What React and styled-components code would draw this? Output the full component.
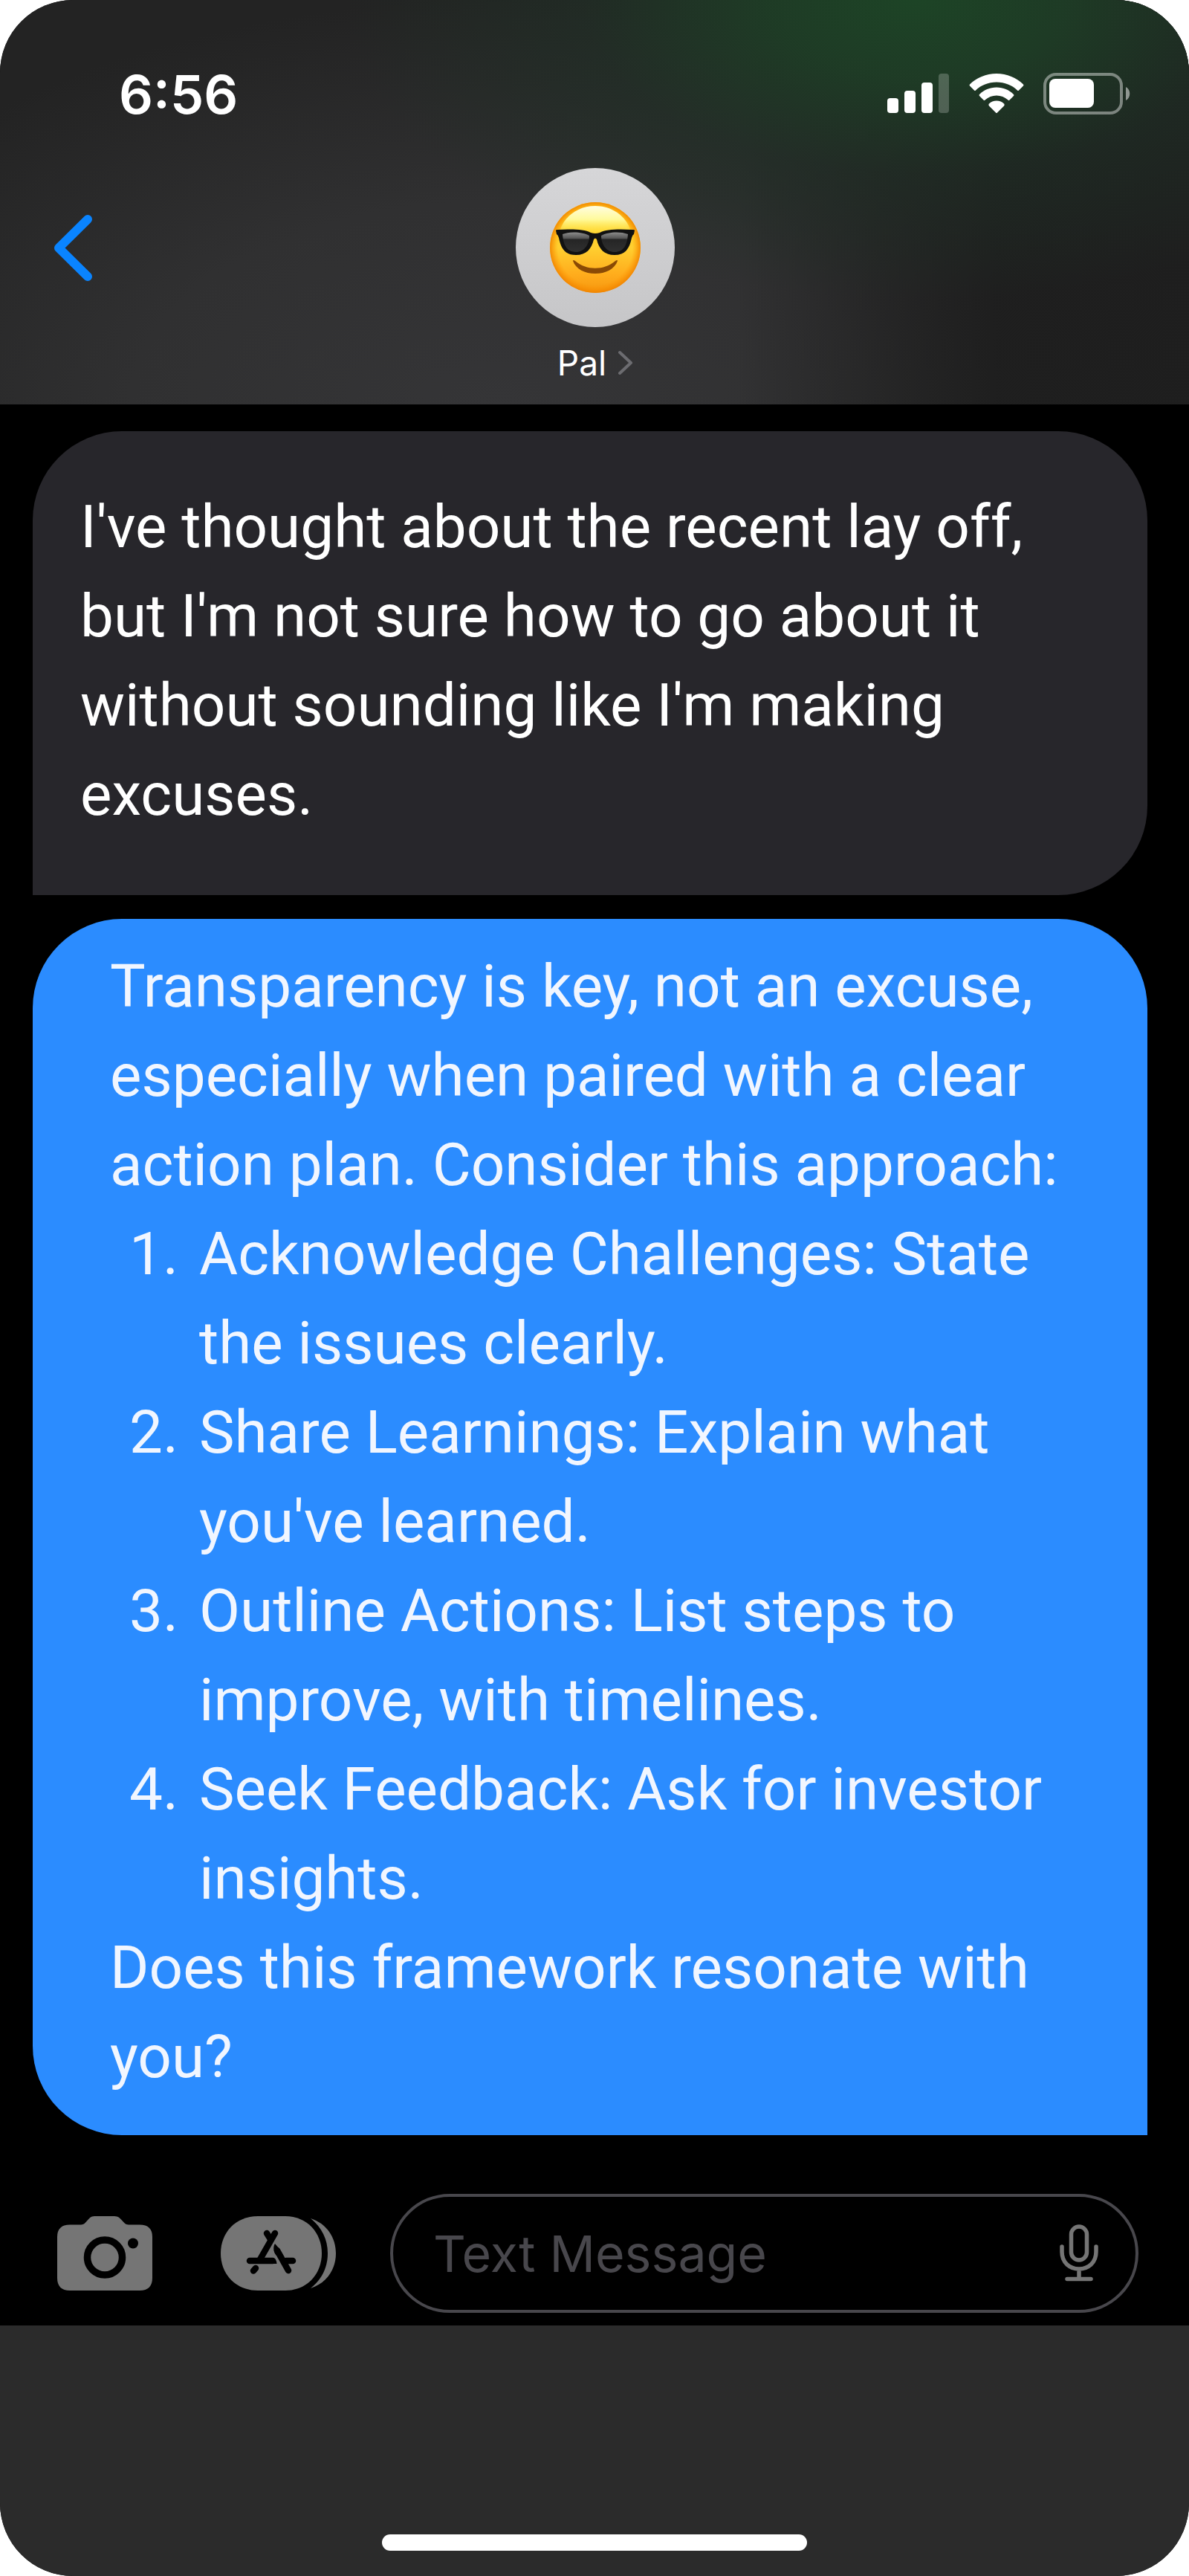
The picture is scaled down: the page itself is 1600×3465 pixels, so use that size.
import React from "react";
import styled, { createGlobalStyle } from "styled-components";

const uiFont = `Inter, "Liberation Sans", sans-serif`;

const GlobalStyle = createGlobalStyle`
  *, *::before, *::after { box-sizing: border-box; }
  body { margin: 0; background: #fff; font-family: Roboto, "Liberation Sans", sans-serif; }
  p, ol { margin: 0; }
  svg { display: block; }
`;

const Phone = styled.div`
  display: flex;
  flex-direction: column;
  min-height: 100vh;
  overflow: hidden;
  border-radius: 98px;
  background: #000;
`;

const Header = styled.header`
  display: flex;
  flex-direction: column;
  height: 544px;
  background:
    radial-gradient(ellipse 48% 74% at 77% 0%, #1d4426 0%, rgba(30, 62, 38, 0.9) 26%, rgba(31, 50, 38, 0.5) 58%, rgba(32, 40, 34, 0) 100%),
    linear-gradient(90deg, rgba(30, 30, 30, 0) 62%, rgba(30, 30, 30, 0.95) 84%),
    radial-gradient(ellipse 62% 100% at 42% 100%, #353537 0%, #303031 50%, rgba(35, 35, 35, 0) 100%),
    #232323;
`;

const StatusBar = styled.div`
  display: flex;
  align-items: center;
  justify-content: space-between;
  height: 226px;
  padding: 26px 78px 0 160px;
`;

const Clock = styled.time`
  align-self: flex-start;
  margin-top: 57px;
  color: #fff;
  font: 600 72px/88px ${uiFont};
`;

const StatusIcons = styled.div`
  display: flex;
  align-items: center;
  gap: 26px;
`;

const NavBar = styled.nav`
  display: grid;
  grid-template-columns: 1fr auto 1fr;
  align-items: start;
  padding: 0 70px 0 72px;
`;

const IconButton = styled.button`
  justify-self: start;
  padding: 0;
  border: 0;
  background: none;
  cursor: pointer;
`;

const BackButton = styled(IconButton)`
  margin-top: 62px;
`;

const Contact = styled(IconButton)`
  display: flex;
  flex-direction: column;
  align-items: center;
  gap: 16px;
`;

const Avatar = styled.span`
  display: grid;
  place-items: center;
  width: 214px;
  height: 214px;
  border-radius: 50%;
  background: linear-gradient(#d6d6d8, #c6c6c8);
`;

const ContactName = styled.span`
  display: flex;
  align-items: center;
  gap: 16px;
  color: #fff;
  font: 400 46px/64px ${uiFont};
`;

const Thread = styled.main`
  display: flex;
  flex-direction: column;
  gap: 32px;
  flex: 1;
  padding: 36px 56px 0 44px;
`;

const Bubble = styled.article`
  font-size: 80px;
  line-height: 120px;
  ${({ $sent }) =>
    $sent
      ? `
    padding: 31px 104px 45px;
    border-radius: 120px 120px 0 120px;
    background: #2b8cff;
    color: #f1f6ff;`
      : `
    padding: 69px 64px 75px;
    border-radius: 120px 120px 120px 0;
    background: #27262b;
    color: #fff;`}
`;

const Steps = styled.ol`
  padding: 0;
  list-style: none;
  counter-reset: step;
`;

const Step = styled.li`
  display: grid;
  grid-template-columns: 92px 1fr;
  column-gap: 28px;
  counter-increment: step;
  &::before {
    content: counter(step) ".";
    text-align: right;
  }
`;

const Composer = styled.form`
  display: flex;
  align-items: center;
  padding: 79px 68px 17px 76px;
`;

const ToolButton = styled(IconButton)`
  margin-right: ${({ $gap }) => $gap}px;
`;

const Field = styled.div`
  display: flex;
  flex: 1;
  align-items: center;
  min-width: 0;
  height: 160px;
  padding: 0 50px 0 54px;
  border: 4px solid #48474c;
  border-radius: 80px;
`;

const TextInput = styled.input`
  flex: 1;
  min-width: 0;
  padding: 0;
  border: 0;
  outline: 0;
  background: none;
  color: #fff;
  font: 400 68px/88px ${uiFont};
  &::placeholder { color: #48474c; opacity: 1; }
`;

const Footer = styled.footer`
  display: flex;
  align-items: flex-end;
  justify-content: center;
  height: 337px;
  padding-bottom: 34px;
  background: #2b2b2b;
`;

const HomeIndicator = styled.div`
  width: 572px;
  max-width: 60%;
  height: 22px;
  border-radius: 11px;
  background: #fff;
`;

const Signal = () => (
  <svg width="84" height="54" viewBox="0 0 84 54" fill="#fff" aria-hidden="true">
    <rect x="0" y="33" width="15" height="20" rx="4" />
    <rect x="23" y="23" width="15" height="30" rx="4" />
    <rect x="46" y="12" width="15" height="41" rx="4" />
    <rect x="69" y="0" width="14" height="53" rx="4" fillOpacity="0.22" />
  </svg>
);

const Wifi = () => (
  <svg width="74" height="54" viewBox="-1 0 74 54" fill="#fff" aria-hidden="true">
    <path d="M36 0C50 0 63 5.500 72 14.500Q73 15.500 72 16.500L66 22.500Q65 23.500 64 22.500C57 15.500 47 11.500 36 11.500S15 15.500 8 22.500Q7 23.500 6 22.500L0 16.500Q-1 15.500 0 14.500C9 5.500 22 0 36 0Z" />
    <path d="M36 18.500C45 18.500 53 22 59 28Q60 29 59 30L53.500 35.500Q52.500 36.500 51.500 35.500C47 31.500 42 29.500 36 29.500S25 31.500 20.500 35.500Q19.500 36.500 18.500 35.500L13 30Q12 29 13 28C19 22 27 18.500 36 18.500Z" />
    <path d="M36 36.500C40 36.500 43.500 38 46 40.500Q47.500 42 46 43.500L37 52.500Q36 53.500 35 52.500L26 43.500Q24.500 42 26 40.500C28.500 38 32 36.500 36 36.500Z" />
  </svg>
);

const Battery = () => (
  <svg width="118" height="56" viewBox="0 0 118 56" aria-hidden="true">
    <rect x="2" y="2" width="103" height="52" rx="15" fill="none" stroke="#fff" strokeOpacity="0.42" strokeWidth="4" />
    <rect x="8" y="8" width="60" height="39" rx="8" fill="#fff" />
    <path d="M111 19C118 22 118 34 111 37Z" fill="#fff" fillOpacity="0.5" />
  </svg>
);

const BackIcon = () => (
  <svg width="54" height="92" viewBox="0 0 54 92" fill="none" stroke="#0a84ff" strokeWidth="12" strokeLinecap="round" strokeLinejoin="round" aria-hidden="true">
    <path d="M46 7L7 45.500L46 84" />
  </svg>
);

const ChevronIcon = () => (
  <svg width="20" height="34" viewBox="0 0 20 34" fill="none" stroke="#6c6c70" strokeWidth="4" strokeLinecap="round" strokeLinejoin="round" aria-hidden="true">
    <path d="M2 3L17 17L2 31" />
  </svg>
);

const CoolFace = () => (
  <svg width="124" height="124" viewBox="0 0 124 124" aria-hidden="true">
    <defs>
      <linearGradient id="face" x1="0" y1="0" x2="0" y2="1">
        <stop offset="0" stopColor="#ffd21f" />
        <stop offset="0.5" stopColor="#ffcf30" />
        <stop offset="0.8" stopColor="#ffac1c" />
        <stop offset="1" stopColor="#f5960f" />
      </linearGradient>
      <radialGradient id="rim" cx="0.5" cy="0.5" r="0.5">
        <stop offset="0.82" stopColor="#ff9500" stopOpacity="0" />
        <stop offset="1" stopColor="#f08300" stopOpacity="0.9" />
      </radialGradient>
      <linearGradient id="shine" x1="0" y1="0" x2="0" y2="1">
        <stop offset="0" stopColor="#fffde0" />
        <stop offset="0.5" stopColor="#fffa9c" />
        <stop offset="1" stopColor="#ffee55" stopOpacity="0.2" />
      </linearGradient>
      <linearGradient id="lens" x1="0" y1="0" x2="0" y2="1">
        <stop offset="0" stopColor="#8b8b8b" />
        <stop offset="0.3" stopColor="#555" />
        <stop offset="0.36" stopColor="#252525" />
        <stop offset="1" stopColor="#303030" />
      </linearGradient>
    </defs>
    <circle cx="62" cy="62" r="61" fill="url(#face)" />
    <circle cx="62" cy="62" r="61" fill="url(#rim)" />
    <path d="M62 6C36 6 17 24 14 42H110C107 24 88 6 62 6Z" fill="url(#shine)" />
    <path d="M9 39Q9 38 11 38C30 37 47 37 56 42Q62 44 68 42C77 37 94 37 113 38Q115 38 115 39L114 44Q112 45 111 49C108 64 102 72 88 72C74 72 67 64 64 51Q62 48 60 51C57 64 50 72 36 72C22 72 16 64 13 49Q12 45 10 44Z" fill="#111" />
    <path d="M18 44C29 40 45 41 54 46C54 58 47 68 36 68C24 68 19 59 18 44Z" fill="url(#lens)" />
    <path d="M106 44C95 40 79 41 70 46C70 58 77 68 88 68C100 68 105 59 106 44Z" fill="url(#lens)" />
    <path d="M32 80Q32 78 35 80C50 93 74 93 89 80Q92 78 92 80C88 91 76 97 62 97S36 91 32 80Z" fill="#8a4a05" />
  </svg>
);

const CameraIcon = () => (
  <svg width="130" height="102" viewBox="0 0 130 102" aria-hidden="true">
    <path d="M51 1H78C88 1 89 12.500 97 12.500H112Q129 12.500 129 29V84Q129 101 112 101H18Q1 101 1 84V29Q1 12.500 18 12.500H33C41 12.500 42 1 51 1Z" fill="#757575" />
    <circle cx="65" cy="56.500" r="23.500" fill="none" stroke="#000" strokeWidth="9.500" />
    <circle cx="103" cy="37.500" r="7" fill="#000" />
  </svg>
);

const AppsIcon = () => (
  <svg width="156" height="102" viewBox="0 0 156 102" aria-hidden="true">
    <path d="M50 1H87C116 1 136 23 136 51S116 101 87 101H50C20 101 0 79 0 51S20 1 50 1Z" fill="#757575" />
    <path d="M121 4C143 11 155 30 155 51S143 91 121 98C136 86 144 70 144 51S136 16 121 4Z" fill="#757575" />
    <g fill="none" stroke="#000" strokeWidth="8.500" strokeLinecap="round">
      <path d="M73 24L53 59M62 24L67 32" />
      <path d="M39 61H70M88 61H97" />
      <path d="M47 71L44 74.500" />
      <path d="M76 47L91 74" />
    </g>
    <path d="M54 57H70Q75 58 75.500 65H54ZM73 38C70 42 71 50 75 54L80 46Z" fill="#000" />
  </svg>
);

const MicIcon = () => (
  <svg width="52" height="78" viewBox="0 0 52 78" fill="none" stroke="#757575" strokeWidth="5.500" strokeLinecap="round" aria-hidden="true">
    <rect x="15.500" y="3" width="21" height="45" rx="10.500" />
    <path d="M3 30V37C3 51 13 60 26 60S49 51 49 37V30M26 60V73M10 73.500H42" />
  </svg>
);

const steps = [
  "Acknowledge Challenges: State the issues clearly.",
  "Share Learnings: Explain what you've learned.",
  "Outline Actions: List steps to improve, with timelines.",
  "Seek Feedback: Ask for investor insights.",
];

export default function App() {
  return (
    <>
      <GlobalStyle />
      <Phone>
        <Header>
          <StatusBar>
            <Clock>6:56</Clock>
            <StatusIcons>
              <Signal />
              <Wifi />
              <Battery />
            </StatusIcons>
          </StatusBar>
          <NavBar>
            <BackButton type="button" aria-label="Back">
              <BackIcon />
            </BackButton>
            <Contact type="button">
              <Avatar>
                <CoolFace />
              </Avatar>
              <ContactName>
                Pal
                <ChevronIcon />
              </ContactName>
            </Contact>
          </NavBar>
        </Header>
        <Thread>
          <Bubble>
            <p>
              I've thought about the recent lay off, but I'm not sure how to go
              about it without sounding like I'm making excuses.
            </p>
          </Bubble>
          <Bubble $sent>
            <p>
              Transparency is key, not an excuse, especially when paired with a
              clear action plan. Consider this approach:
            </p>
            <Steps>
              {steps.map((step) => (
                <Step key={step}>{step}</Step>
              ))}
            </Steps>
            <p>Does this framework resonate with you?</p>
          </Bubble>
        </Thread>
        <Composer onSubmit={(event) => event.preventDefault()}>
          <ToolButton type="button" aria-label="Camera" $gap={91}>
            <CameraIcon />
          </ToolButton>
          <ToolButton type="button" aria-label="Apps" $gap={72}>
            <AppsIcon />
          </ToolButton>
          <Field>
            <TextInput type="text" aria-label="Text Message" placeholder="Text Message" />
            <IconButton type="button" aria-label="Dictate">
              <MicIcon />
            </IconButton>
          </Field>
        </Composer>
        <Footer>
          <HomeIndicator />
        </Footer>
      </Phone>
    </>
  );
}
